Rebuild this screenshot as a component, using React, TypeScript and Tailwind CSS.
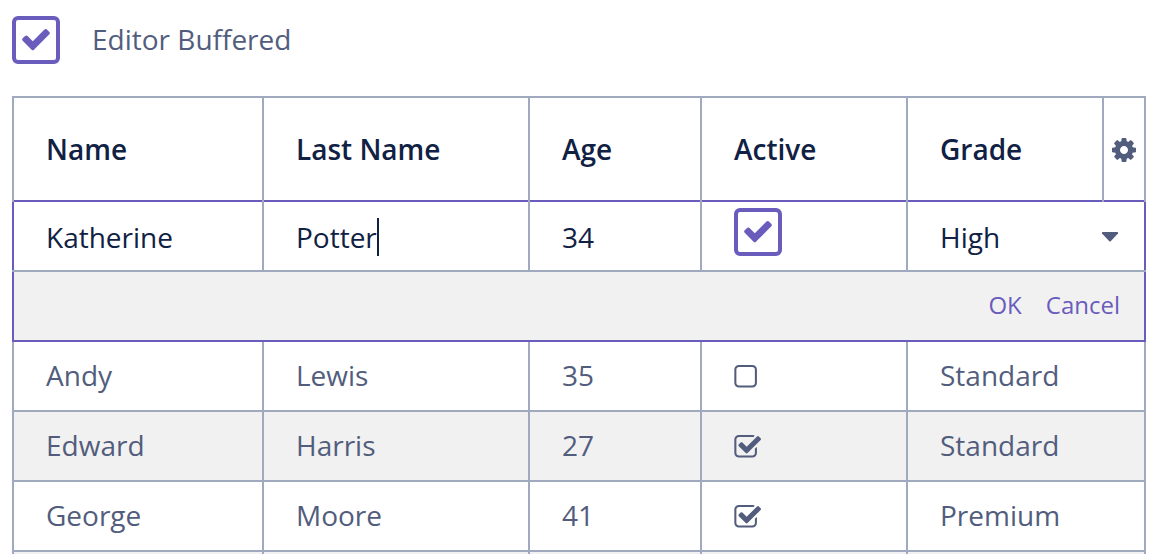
import React, { useState } from "react";
import clsx from "clsx";

const CHECK =
  "M1671 566q0 40-28 68l-724 724-136 136q-28 28-68 28t-68-28l-136-136-362-362q-28-28-28-68t28-68l136-136q28-28 68-28t68 28l294 295 656-657q28-28 68-28t68 28l136 136q28 28 28 68z";
const COG =
  "M1152 896q0-106-75-181t-181-75-181 75-75 181 75 181 181 75 181-75 75-181zm512-109v222q0 12-8 23t-20 13l-185 28q-19 54-39 91 35 50 107 138 10 12 10 25t-9 23q-27 37-99 108t-94 71q-12 0-26-9l-138-108q-44 23-91 38-16 136-29 186-7 28-36 28h-222q-14 0-24.5-8.5t-11.5-21.5l-28-184q-49-16-90-37l-141 107q-10 9-25 9-14 0-25-11-126-114-165-168-7-10-7-23 0-12 8-23 15-21 51-66.5t54-70.5q-27-50-41-99l-183-27q-13-2-21-12.5t-8-23.5v-222q0-12 8-23t19-13l186-28q14-46 39-92-40-57-107-138-10-12-10-24 0-10 9-23 26-36 98.5-107.5t94.5-71.5q13 0 26 10l138 107q44-23 91-38 16-136 29-186 7-28 36-28h222q14 0 24.5 8.5t11.5 21.5l28 184q49 16 90 37l142-107q9-9 24-9 13 0 25 10 129 119 165 170 7 8 7 22 0 12-8 23-15 21-51 66.5t-54 70.5q26 50 41 98l183 28q13 2 21 12.5t8 23.5z";
const CHECK_SQUARE =
  "M1472 930v318q0 119-84.5 203.5t-203.5 84.5h-832q-119 0-203.5-84.5t-84.5-203.5v-832q0-119 84.5-203.5t203.5-84.5h832q63 0 117 25 15 7 18 23 3 17-9 29l-49 49q-10 10-23 10-3 0-9-2-23-6-45-6h-832q-66 0-113 47t-47 113v832q0 66 47 113t113 47h832q66 0 113-47t47-113v-254q0-13 9-22l64-64q10-10 23-10 6 0 12 3 20 8 20 29zm231-489l-814 814q-24 24-57 24t-57-24l-430-430q-24-24-24-57t24-57l110-110q24-24 57-24t57 24l263 263 647-647q24-24 57-24t57 24l110 110q24 24 24 57t-24 57z";
const SQUARE =
  "M1184 256h-832q-66 0-113 47t-47 113v832q0 66 47 113t113 47h832q66 0 113-47t47-113v-832q0-66-47-113t-113-47zm288 160v832q0 119-84.5 203.5t-203.5 84.5h-832q-119 0-203.5-84.5t-84.5-203.5v-832q0-119 84.5-203.5t203.5-84.5h832q119 0 203.5 84.5t84.5 203.5z";

function BigCheckbox({ id, label }: { id: string; label?: string }) {
  const [on, setOn] = useState(true);
  return (
    <span className="grid size-12 shrink-0">
      <input
        id={id}
        type="checkbox"
        aria-label={label}
        checked={on}
        onChange={() => setOn(!on)}
        className="col-start-1 row-start-1 size-12 appearance-none rounded-md border-4 border-[#6a5cbc] bg-white"
      />
      {on && (
        <svg
          viewBox="0 0 1792 1792"
          className="pointer-events-none col-start-1 row-start-1 mt-[7px] size-8 justify-self-center fill-[#6a5cbc]"
        >
          <path d={CHECK} />
        </svg>
      )}
    </span>
  );
}

function SmallCheckbox({ label, initial }: { label: string; initial: boolean }) {
  const [on, setOn] = useState(initial);
  return (
    <span className="grid size-7">
      <input
        type="checkbox"
        aria-label={label}
        checked={on}
        onChange={() => setOn(!on)}
        className="col-start-1 row-start-1 size-7 appearance-none"
      />
      <svg
        viewBox="44 -118 1744 1744"
        className="pointer-events-none col-start-1 row-start-1 size-7 fill-[#525d7d]"
      >
        <path d={on ? CHECK_SQUARE : SQUARE} />
      </svg>
    </span>
  );
}

const people = [
  { name: "Andy", last: "Lewis", age: 35, active: false, grade: "Standard" },
  { name: "Edward", last: "Harris", age: 27, active: true, grade: "Standard" },
  { name: "George", last: "Moore", age: 41, active: true, grade: "Premium" },
];

const head = "border-x-2 border-t-2 border-[#a0aabe] pl-8 text-left font-semibold";
const cell = "border-2 border-[#a0aabe] pb-0.5 pl-8";
const editCell = "border-2 border-[#a0aabe] border-t-[#6a5cbc] pl-8";
const field = "block w-full bg-transparent outline-none";

export default function App() {
  return (
    <main className="bg-white px-3 pt-4 font-['Open_Sans',sans-serif] text-[28px] leading-10 text-[#525d7d]">
      <div className="flex items-center gap-8">
        <BigCheckbox id="buffered" />
        <label htmlFor="buffered" className="pb-0.5">Editor Buffered</label>
      </div>

      <table className="mt-8 w-full table-fixed border-collapse">
        <colgroup>
          <col className="w-[250px]" />
          <col className="w-[266px]" />
          <col className="w-[172px]" />
          <col className="w-[206px]" />
          <col className="w-[196px]" />
          <col className="w-[42px]" />
        </colgroup>
        <thead className="text-[#102143]">
          <tr className="h-[104px]">
            <th scope="col" className={head}>Name</th>
            <th scope="col" className={head}>Last Name</th>
            <th scope="col" className={head}>Age</th>
            <th scope="col" className={head}>Active</th>
            <th scope="col" className={head}>Grade</th>
            <th scope="col" className="border-x-2 border-t-2 border-[#a0aabe] pt-0.5">
              <button type="button" aria-label="Choose columns" className="mx-auto block">
                <svg viewBox="0 0 1792 1792" className="size-7 fill-[#525d7d]">
                  <path d={COG} />
                </svg>
              </button>
            </th>
          </tr>
        </thead>
        <tbody className="text-[#102143]">
          <tr className="h-[70px]">
            <td className={clsx(editCell, "border-l-[#6a5cbc] pt-0.5")}>
              <input aria-label="Name" defaultValue="Katherine" className={field} />
            </td>
            <td className={clsx(editCell, "pt-0.5")}>
              <div className="flex items-center">
                <input
                  aria-label="Last Name"
                  defaultValue="Potter"
                  className="field-sizing-content max-w-full bg-transparent caret-transparent outline-none"
                />
                <span className="h-[38px] w-0.5 bg-[#102143]" />
              </div>
            </td>
            <td className={clsx(editCell, "pt-0.5")}>
              <input aria-label="Age" defaultValue="34" className={field} />
            </td>
            <td className={clsx(editCell, "pt-1.5 align-top")}>
              <BigCheckbox id="active" label="Active" />
            </td>
            <td colSpan={2} className={clsx(editCell, "border-r-[#6a5cbc] pt-0.5")}>
              <div className="grid items-center">
                <select
                  aria-label="Grade"
                  defaultValue="High"
                  className="col-start-1 row-start-1 w-full appearance-none bg-transparent outline-none"
                >
                  <option>High</option>
                  <option>Standard</option>
                  <option>Premium</option>
                </select>
                <svg
                  viewBox="0 0 16 10"
                  className="pointer-events-none col-start-1 row-start-1 mr-[26px] h-2.5 w-4 justify-self-end fill-[#525d7d]"
                >
                  <path d="M.5 0h15q.5 0 .5.5v1L8.7 9.2q-.7.6-1.4 0L0 1.5v-1Q0 0 .5 0z" />
                </svg>
              </div>
            </td>
          </tr>
          <tr className="h-[70px] bg-[#f1f1f1]">
            <td
              colSpan={6}
              className="border-2 border-[#6a5cbc] border-t-[#a0aabe] pr-6 pb-0.5 text-2xl text-[#6a5cbc]"
            >
              <div className="flex justify-end gap-6">
                <button type="button">OK</button>
                <button type="button">Cancel</button>
              </div>
            </td>
          </tr>
        </tbody>
        <tbody>
          {people.map((p) => (
            <tr key={p.name} className="h-[70px] even:bg-[#f1f1f1]">
              <td className={cell}>{p.name}</td>
              <td className={cell}>{p.last}</td>
              <td className={cell}>{p.age}</td>
              <td className={cell}>
                <SmallCheckbox label={`${p.name} active`} initial={p.active} />
              </td>
              <td colSpan={2} className={cell}>{p.grade}</td>
            </tr>
          ))}
          <tr aria-hidden="true" className="h-[3px] bg-[#f1f1f1]">
            <td className="border-x-2 border-[#a0aabe] p-0" />
            <td className="border-x-2 border-[#a0aabe] p-0" />
            <td className="border-x-2 border-[#a0aabe] p-0" />
            <td className="border-x-2 border-[#a0aabe] p-0" />
            <td colSpan={2} className="border-x-2 border-[#a0aabe] p-0" />
          </tr>
        </tbody>
      </table>
    </main>
  );
}
